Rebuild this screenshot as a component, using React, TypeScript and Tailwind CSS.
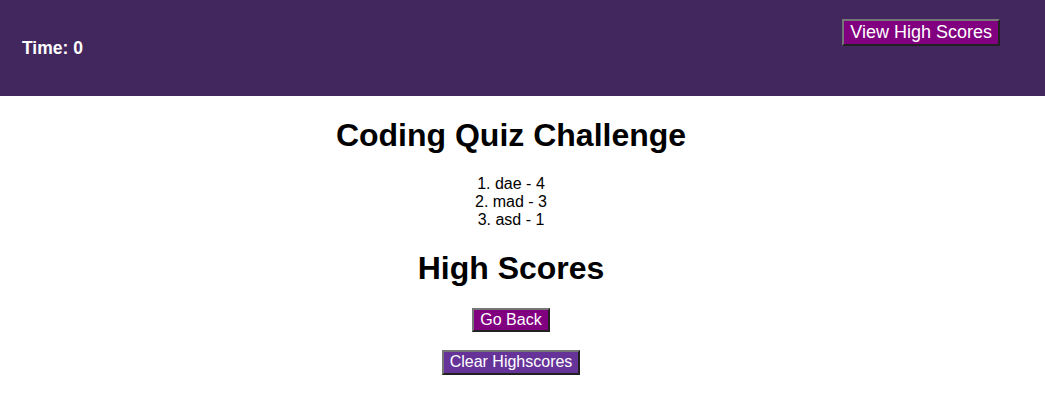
const scores = [
  { name: "dae", score: 4 },
  { name: "mad", score: 3 },
  { name: "asd", score: 1 },
];

const btn =
  "border-2 [border-style:outset] border-[#767676] px-[6px] py-px leading-[1.15] text-white";

export default function App() {
  return (
    <div className="min-h-screen bg-white font-['Liberation_Sans',Arial,sans-serif] text-black">
      <header className="flex h-[96px] items-start justify-between bg-[#42275e] pl-[22px] pr-[45px]">
        <div className="mt-[35px] text-[17.5px] font-bold text-white">Time: 0</div>
        <button className={`${btn} mt-[19px] bg-[#800080] text-[18px]`}>View High Scores</button>
      </header>

      <main className="flex flex-col items-center pr-[23px]">
        <h1 className="mt-[21px] text-[32px] font-bold leading-[37px]">Coding Quiz Challenge</h1>
        <ol className="mt-[21px] text-center text-[16px] leading-[18px]">
          {scores.map((s, i) => (
            <li key={s.name}>
              {i + 1}. {s.name} - {s.score}
            </li>
          ))}
        </ol>
        <h2 className="mt-[21px] text-[32px] font-bold leading-[37px]">High Scores</h2>
        <div className="mt-[21px] flex flex-col items-center gap-[18px]">
          <button className={`${btn} bg-[#800080] text-[16px]`}>Go Back</button>
          <button className={`${btn} bg-[#663399] text-[16px]`}>Clear Highscores</button>
        </div>
      </main>
    </div>
  );
}
